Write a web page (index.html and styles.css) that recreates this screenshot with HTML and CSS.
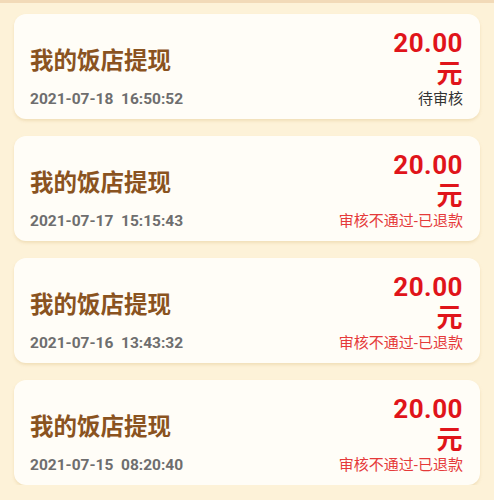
FILE: index.html
```html
<!DOCTYPE html>
<html lang="zh-CN">
<head>
<meta charset="utf-8">
<link rel="stylesheet" href="styles.css">
</head>
<body>
<div class="topbar"></div>
<div class="list">
  <div class="card">
    <div class="left">
      <div class="title">我的饭店提现</div>
      <div class="date">2021-07-18&nbsp;&nbsp;16:50:52</div>
    </div>
    <div class="right">
      <div class="amount">20.00<br>元</div>
      <div class="status pending">待审核</div>
    </div>
  </div>
  <div class="card">
    <div class="left">
      <div class="title">我的饭店提现</div>
      <div class="date">2021-07-17&nbsp;&nbsp;15:15:43</div>
    </div>
    <div class="right">
      <div class="amount">20.00<br>元</div>
      <div class="status refused">审核不通过-已退款</div>
    </div>
  </div>
  <div class="card">
    <div class="left">
      <div class="title">我的饭店提现</div>
      <div class="date">2021-07-16&nbsp;&nbsp;13:43:32</div>
    </div>
    <div class="right">
      <div class="amount">20.00<br>元</div>
      <div class="status refused">审核不通过-已退款</div>
    </div>
  </div>
  <div class="card">
    <div class="left">
      <div class="title">我的饭店提现</div>
      <div class="date">2021-07-15&nbsp;&nbsp;08:20:40</div>
    </div>
    <div class="right">
      <div class="amount">20.00<br>元</div>
      <div class="status refused">审核不通过-已退款</div>
    </div>
  </div>
</div>
</body>
</html>
```
FILE: styles.css
```css
html, body {
  margin: 0;
  padding: 0;
  background: #fdf2d8;
  font-family: "Noto Sans CJK SC", "Noto Sans", sans-serif;
}
.topbar {
  height: 3px;
  background: #f2dab8;
}
.list {
  display: flex;
  flex-direction: column;
  gap: 17px;
  padding: 11px 14px 0 14px;
}
.card {
  display: flex;
  justify-content: space-between;
  height: 105px;
  box-sizing: border-box;
  padding: 14px 17px 10px 16px;
  background: #fffdf7;
  border-radius: 12px;
  box-shadow: 0 2px 3px rgba(220, 190, 130, 0.35);
}
.left {
  display: flex;
  flex-direction: column;
  padding-top: 15px;
}
.title {
  font-size: 23.5px;
  line-height: 32px;
  font-weight: 700;
  color: #8a531f;
  margin-bottom: 14px;
}
.date {
  font-family: Roboto, "Noto Sans", sans-serif;
  font-size: 15.5px;
  line-height: 20px;
  font-weight: 700;
  color: #6e6e6e;
}
.right {
  display: flex;
  flex-direction: column;
  align-items: flex-end;
  font-family: Roboto, "Noto Sans CJK SC", sans-serif;
}
.amount {
  font-size: 26px;
  line-height: 30.5px;
  font-weight: 700;
  color: #e0141a;
  letter-spacing: 0.5px;
  text-align: right;
  margin-bottom: 1px;
}
.status {
  font-size: 15px;
  line-height: 18px;
}
.pending {
  color: #333333;
}
.refused {
  color: #e53a3a;
}
```
